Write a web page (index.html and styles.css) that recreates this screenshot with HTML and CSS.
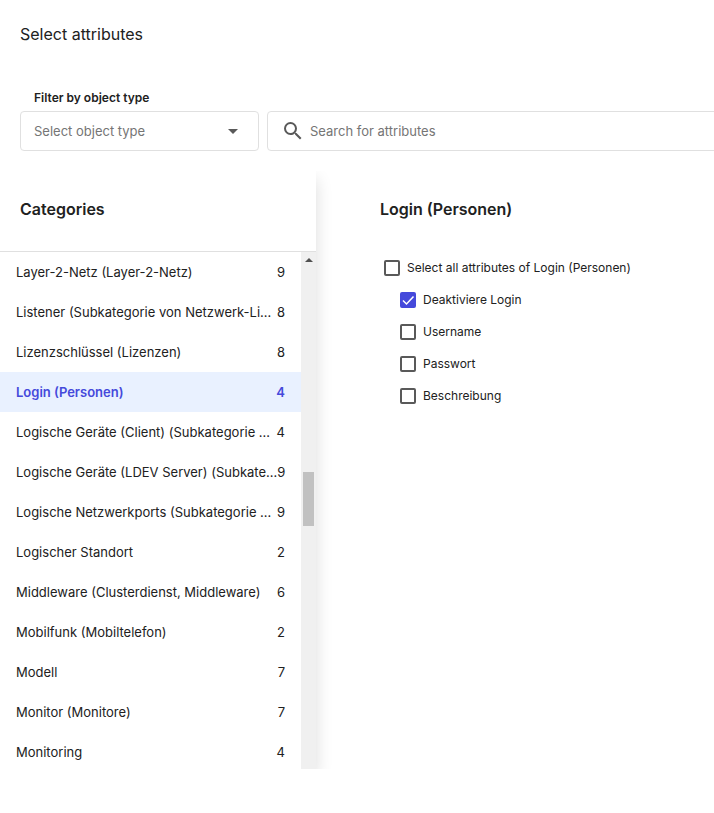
FILE: index.html
```html
<!DOCTYPE html>
<html lang="en">
<head>
<meta charset="utf-8">
<meta name="viewport" content="width=device-width, initial-scale=1">
<title>Select attributes</title>
<link rel="stylesheet" href="styles.css">
</head>
<body>
<header class="header">
  <h1 class="title">Select attributes</h1>
</header>
<form class="filters">
  <div class="field field-type">
    <label class="field-label" for="object-type">Filter by object type</label>
    <div class="control">
      <select class="select" id="object-type"><option>Select object type</option></select>
      <svg class="caret" viewBox="0 0 10 5" aria-hidden="true"><path d="M0 0h10L5 5z"/></svg>
    </div>
  </div>
  <div class="field field-search">
    <div class="control search">
      <svg class="search-icon" viewBox="0 0 24 24" aria-hidden="true"><path d="M15.5 14h-.79l-.28-.27A6.471 6.471 0 0 0 16 9.5 6.5 6.5 0 1 0 9.5 16c1.61 0 3.09-.59 4.23-1.57l.27.28v.79l5 4.99L20.49 19l-4.99-5zm-6 0C7.01 14 5 11.99 5 9.5S7.01 5 9.5 5 14 7.01 14 9.5 11.99 14 9.5 14z"/></svg>
      <input class="search-input" type="text" placeholder="Search for attributes" aria-label="Search for attributes">
    </div>
  </div>
</form>
<main class="content">
  <section class="sidebar">
    <h2 class="sidebar-title">Categories</h2>
    <div class="list-frame">
      <ul class="list">
        <li><a class="item" href="#"><span class="name">Layer-2-Netz (Layer-2-Netz)</span><span class="count">9</span></a></li>
        <li><a class="item" href="#"><span class="name">Listener (Subkategorie von Netzwerk-Li…</span><span class="count">8</span></a></li>
        <li><a class="item" href="#"><span class="name">Lizenzschlüssel (Lizenzen)</span><span class="count">8</span></a></li>
        <li><a class="item active" href="#" aria-current="true"><span class="name">Login (Personen)</span><span class="count">4</span></a></li>
        <li><a class="item" href="#"><span class="name">Logische Geräte (Client) (Subkategorie …</span><span class="count">4</span></a></li>
        <li><a class="item" href="#"><span class="name">Logische Geräte (LDEV Server) (Subkate…</span><span class="count">9</span></a></li>
        <li><a class="item" href="#"><span class="name">Logische Netzwerkports (Subkategorie …</span><span class="count">9</span></a></li>
        <li><a class="item" href="#"><span class="name">Logischer Standort</span><span class="count">2</span></a></li>
        <li><a class="item" href="#"><span class="name">Middleware (Clusterdienst, Middleware)</span><span class="count">6</span></a></li>
        <li><a class="item" href="#"><span class="name">Mobilfunk (Mobiltelefon)</span><span class="count">2</span></a></li>
        <li><a class="item" href="#"><span class="name">Modell</span><span class="count">7</span></a></li>
        <li><a class="item" href="#"><span class="name">Monitor (Monitore)</span><span class="count">7</span></a></li>
        <li><a class="item" href="#"><span class="name">Monitoring</span><span class="count">4</span></a></li>
      </ul>
      <div class="scrollbar" aria-hidden="true">
        <svg class="scroll-up" viewBox="0 0 8 4"><path d="M4 0l4 4H0z"/></svg>
        <div class="thumb"></div>
      </div>
    </div>
  </section>
  <section class="details">
    <h2 class="details-title">Login (Personen)</h2>
    <label class="check"><input type="checkbox">Select all attributes of Login (Personen)</label>
    <div class="children">
      <label class="check"><span class="box"><input type="checkbox" checked><svg class="tick" viewBox="0 0 16 16" aria-hidden="true"><path d="M3 8.500l3.500 3.500L13.500 4.500"/></svg></span>Deaktiviere Login</label>
      <label class="check"><input type="checkbox">Username</label>
      <label class="check"><input type="checkbox">Passwort</label>
      <label class="check"><input type="checkbox">Beschreibung</label>
    </div>
  </section>
</main>
</body>
</html>
```

FILE: styles.css
```css
* { box-sizing: border-box; }

body {
  margin: 0;
  overflow-x: hidden;
  background: #fff;
  color: #212121;
  font: 13px/20px Inter, "Liberation Sans", sans-serif;
}

h1, h2, ul { margin: 0; padding: 0; }

.header { padding: 22px 20px 0; }
.title { font-size: 16px; line-height: 24px; font-weight: 400; }

.filters {
  display: flex;
  align-items: flex-end;
  gap: 8px;
  margin: 42px -8px 0 20px;
}
.field-type { flex: 0 0 239px; }
.field-search { flex: 1; min-width: 0; }
.field-label {
  display: block;
  padding: 0 14px;
  margin-bottom: 3px;
  font-size: 12px;
  font-weight: 600;
}
.control {
  display: flex;
  align-items: center;
  position: relative;
  height: 40px;
  border: 1px solid #e0e0e0;
  border-radius: 4px;
}
.select, .search-input {
  appearance: none;
  width: 100%;
  height: 100%;
  border: 0;
  outline: 0;
  background: transparent;
  color: #757575;
  font: inherit;
}
.select { padding: 0 40px 0 13px; }
.caret {
  position: absolute;
  right: 20px;
  width: 10px;
  height: 5px;
  fill: #595959;
  pointer-events: none;
}
.search { padding-left: 13px; gap: 5px; }
.search-icon { flex: none; width: 24px; height: 24px; fill: #595959; }
.search-input { padding: 0; }
.search-input::placeholder { color: #757575; opacity: 1; }

.content {
  display: flex;
  margin-top: 20px;
  overflow: hidden;
}
.sidebar {
  flex: 0 0 316px;
  min-width: 0;
  background: #fff;
  box-shadow: 0 8px 16px rgba(0, 0, 0, 0.14);
}
.sidebar-title, .details-title {
  font-size: 16px;
  line-height: 24px;
  font-weight: 600;
}
.sidebar-title { padding: 26px 20px 30px; border-bottom: 1px solid #e0e0e0; }

.list-frame { display: flex; }
.list { flex: 1; min-width: 0; list-style: none; margin-bottom: -3px; }
.item {
  display: flex;
  align-items: center;
  justify-content: space-between;
  height: 40px;
  padding: 0 16px;
  color: inherit;
  text-decoration: none;
}
.item.active { background: #e9f1ff; color: #4549db; font-weight: 600; }
.name { white-space: nowrap; }
.count { flex: none; }

.scrollbar {
  display: flex;
  flex-direction: column;
  align-items: center;
  width: 15px;
  padding-top: 6px;
  background: #f0f0f0;
}
.scroll-up { width: 8px; height: 4px; fill: #505050; }
.thumb { width: 11px; height: 54px; margin-top: 210px; background: #c1c1c1; }

.details { flex: 1; min-width: 0; padding: 26px 20px 0 64px; }
.details-title { margin-bottom: 31px; }
.check {
  display: flex;
  align-items: center;
  gap: 7px;
  height: 32px;
  padding-left: 4px;
  font-size: 12px;
}
.children { padding-left: 16px; }
.check input {
  appearance: none;
  flex: none;
  width: 16px;
  height: 16px;
  margin: 0;
  border: 2px solid #595959;
  border-radius: 2px;
}
.check input:checked { border-color: #4549db; background: #4549db; }
.box { display: flex; position: relative; }
.tick {
  position: absolute;
  inset: 0;
  fill: none;
  stroke: #fff;
  stroke-width: 1.5;
  pointer-events: none;
}
```
